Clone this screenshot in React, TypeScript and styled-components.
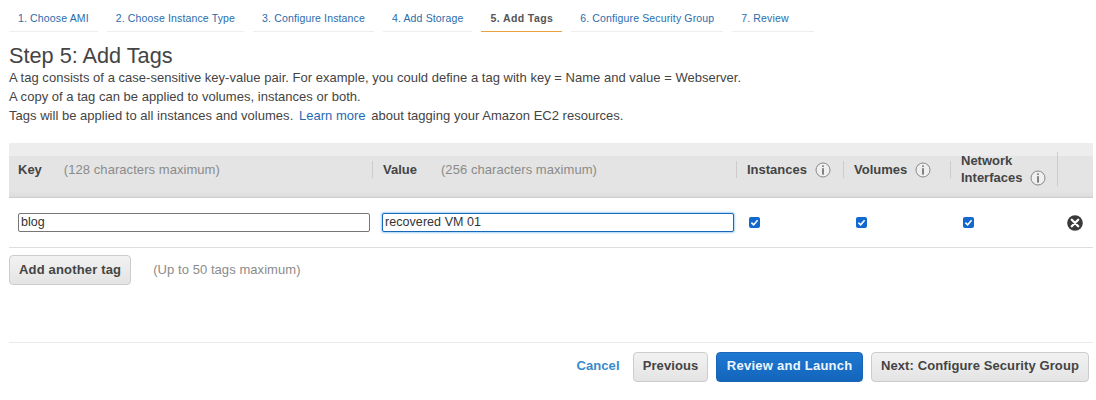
import React from 'react';
import styled, { createGlobalStyle } from 'styled-components';

const GlobalStyle = createGlobalStyle`
  html, body {
    margin: 0;
    padding: 0;
    background: #fff;
    font-family: "Liberation Sans", Arial, sans-serif;
    color: #444;
  }
`;

const Page = styled.div`
  width: 1096px;
  height: 400px;
  box-sizing: border-box;
  padding: 5px 3px 0 9px;
  overflow: hidden;
`;

const Steps = styled.ul`
  display: flex;
  gap: 9px;
  list-style: none;
  margin: 0;
  padding: 0;
`;

const Step = styled.li<{ $active?: boolean }>`
  box-sizing: border-box;
  height: 27px;
  padding: 0 9px;
  line-height: 26px;
  font-size: 10.5px;
  letter-spacing: ${p => (p.$active ? '0.4px' : '0.145px')};
  white-space: nowrap;
  color: ${p => (p.$active ? '#555' : '#2a6cab')};
  font-weight: ${p => (p.$active ? 'bold' : 'normal')};
  border-bottom: 1px solid ${p => (p.$active ? '#e8a33d' : '#eee')};
  &:last-child {
    min-width: 82px;
  }
`;

const Title = styled.h1`
  margin: 11px 0 0;
  font-size: 21.7px;
  line-height: 25px;
  font-weight: normal;
  color: #444;
`;

const Intro = styled.p`
  margin: 0;
  font-size: 13px;
  line-height: 19px;
  letter-spacing: 0.02px;
  color: #444;
`;

const Link = styled.a`
  color: #1f69b3;
  margin: 0 2px;
`;

const TagTable = styled.div`
  margin-top: 18px;
  display: grid;
  grid-template-columns: 364px 364px 107px 107px 107px 35px;
`;

const HeaderRow = styled.div`
  grid-column: 1 / -1;
  display: grid;
  grid-template-columns: subgrid;
  align-items: center;
  height: 55px;
  box-sizing: border-box;
  padding: 4px 0 6px;
  background: linear-gradient(
    #ededed 0,
    #ededed 13px,
    #e4e4e4 13px,
    #e4e4e4 48px,
    #dcdcdc 54px
  );
  border-bottom: 1px solid #ccc;
`;

const HeaderCell = styled.div`
  box-sizing: border-box;
  padding: 0 9px 0 10px;
  font-size: 13px;
  line-height: 17px;
  font-weight: bold;
  color: #444;
  border-right: 1px solid #ccc;
  &:first-child {
    padding-left: 9px;
  }
`;

const LastHeaderCell = styled.div``;

const Hint = styled.span`
  font-weight: normal;
  color: #8b8b8b;
  letter-spacing: 0.06px;
  margin-left: 22px;
`;

const ValueHint = styled(Hint)`
  margin-left: 24px;
`;

const InfoIcon = styled.svg`
  width: 16px;
  height: 16px;
  margin-left: 8px;
  vertical-align: -4px;
`;

const BodyRow = styled.div`
  grid-column: 1 / -1;
  display: grid;
  grid-template-columns: subgrid;
  align-items: center;
  height: 50px;
  box-sizing: border-box;
  border-bottom: 1px solid #ddd;
`;

const BodyCell = styled.div`
  display: flex;
  align-items: center;
  padding-left: 9px;
`;

const CheckCell = styled(BodyCell)`
  padding-left: 12px;
`;

const RemoveCell = styled(BodyCell)`
  padding-left: 9px;
`;

const TextField = styled.input<{ $focused?: boolean }>`
  box-sizing: border-box;
  width: 352px;
  height: 19px;
  padding: 0 2px 1px;
  font: 12.5px "Liberation Sans", Arial, sans-serif;
  letter-spacing: 0.06px;
  color: #333;
  outline: none;
  border-radius: 2px;
  border: 1px solid ${p => (p.$focused ? '#1668b8' : '#777')};
  box-shadow: ${p => (p.$focused ? '0 0 2px 1px #a9d2f4' : 'none')};
`;

const CheckBox = styled.span`
  display: flex;
  align-items: center;
  justify-content: center;
  width: 11px;
  height: 11px;
  border-radius: 2px;
  background: #1169d0;
`;

const Button = styled.button<{ $primary?: boolean }>`
  box-sizing: border-box;
  height: 30px;
  padding: 0 ${p => (p.$primary ? '9.5px' : '9px')} 2px;
  font: bold 13px "Liberation Sans", Arial, sans-serif;
  letter-spacing: ${p => (p.$primary ? '0.25px' : '0.1px')};
  white-space: nowrap;
  border-radius: 4px;
  border: 1px solid ${p => (p.$primary ? '#1a66b5' : '#ccc')};
  color: ${p => (p.$primary ? '#eef6fd' : '#444')};
  background: ${p =>
    p.$primary
      ? 'linear-gradient(#1f78d1, #1265bb)'
      : 'linear-gradient(#f2f2f2, #e4e4e4)'};
`;

const AddButton = styled(Button)`
  letter-spacing: 0.17px;
`;

const AddRow = styled.div`
  display: flex;
  align-items: center;
  gap: 22px;
  margin-top: 7px;
`;

const AddHint = styled.span`
  font-size: 13px;
  letter-spacing: 0.06px;
  color: #8b8b8b;
  margin-bottom: 1px;
`;

const Footer = styled.div`
  display: flex;
  align-items: center;
  justify-content: flex-end;
  height: 40px;
  margin-top: 57px;
  padding: 8px 4px 0 0;
  box-sizing: border-box;
  border-top: 1px solid #eaeaea;
  gap: 8px;
`;

const Cancel = styled.a`
  margin: 0 5px 2px 0;
  font-size: 13px;
  font-weight: bold;
  letter-spacing: 0.1px;
  color: #3a8acb;
`;

const steps = [
  '1. Choose AMI',
  '2. Choose Instance Type',
  '3. Configure Instance',
  '4. Add Storage',
  '5. Add Tags',
  '6. Configure Security Group',
  '7. Review',
];

const Info = () => (
  <InfoIcon viewBox="0 0 16 16">
    <circle cx="8" cy="8" r="7" fill="#efefef" stroke="#888" strokeWidth="1" />
    <rect x="7.3" y="3.4" width="1.4" height="1.5" fill="#555" />
    <rect x="7.3" y="6.2" width="1.4" height="6.4" fill="#555" />
  </InfoIcon>
);

const Check = () => (
  <CheckBox>
    <svg width="9" height="9" viewBox="0 0 9 9">
      <path d="M1.4 4.6 L3.6 6.8 L7.6 2.2" fill="none" stroke="#fff" strokeWidth="1.6" />
    </svg>
  </CheckBox>
);

const Remove = () => (
  <svg width="16" height="16" viewBox="0 0 16 16">
    <circle cx="8" cy="8" r="7.8" fill="#3a3a3a" />
    <path d="M4.8 4.8 L11.2 11.2 M11.2 4.8 L4.8 11.2" stroke="#fff" strokeWidth="2.3" strokeLinecap="round" />
  </svg>
);

export default function App() {
  return (
    <Page>
      <GlobalStyle />
      <Steps>
        {steps.map(s => (
          <Step key={s} $active={s === '5. Add Tags'}>
            {s}
          </Step>
        ))}
      </Steps>
      <Title>Step 5: Add Tags</Title>
      <Intro>
        A tag consists of a case-sensitive key-value pair. For example, you could define a tag with key = Name and value = Webserver.
      </Intro>
      <Intro>A copy of a tag can be applied to volumes, instances or both.</Intro>
      <Intro>
        Tags will be applied to all instances and volumes. <Link>Learn more</Link> about tagging your Amazon EC2 resources.
      </Intro>
      <TagTable>
        <HeaderRow>
          <HeaderCell>
            Key<Hint>(128 characters maximum)</Hint>
          </HeaderCell>
          <HeaderCell>
            Value<ValueHint>(256 characters maximum)</ValueHint>
          </HeaderCell>
          <HeaderCell>
            Instances
            <Info />
          </HeaderCell>
          <HeaderCell>
            Volumes
            <Info />
          </HeaderCell>
          <HeaderCell>
            Network
            <br />
            Interfaces
            <Info />
          </HeaderCell>
          <LastHeaderCell />
        </HeaderRow>
        <BodyRow>
          <BodyCell>
            <TextField defaultValue="blog" />
          </BodyCell>
          <BodyCell>
            <TextField $focused defaultValue="recovered VM 01" />
          </BodyCell>
          <CheckCell>
            <Check />
          </CheckCell>
          <CheckCell>
            <Check />
          </CheckCell>
          <CheckCell>
            <Check />
          </CheckCell>
          <RemoveCell>
            <Remove />
          </RemoveCell>
        </BodyRow>
      </TagTable>
      <AddRow>
        <AddButton>Add another tag</AddButton>
        <AddHint>(Up to 50 tags maximum)</AddHint>
      </AddRow>
      <Footer>
        <Cancel>Cancel</Cancel>
        <Button>Previous</Button>
        <Button $primary>Review and Launch</Button>
        <Button>Next: Configure Security Group</Button>
      </Footer>
    </Page>
  );
}
